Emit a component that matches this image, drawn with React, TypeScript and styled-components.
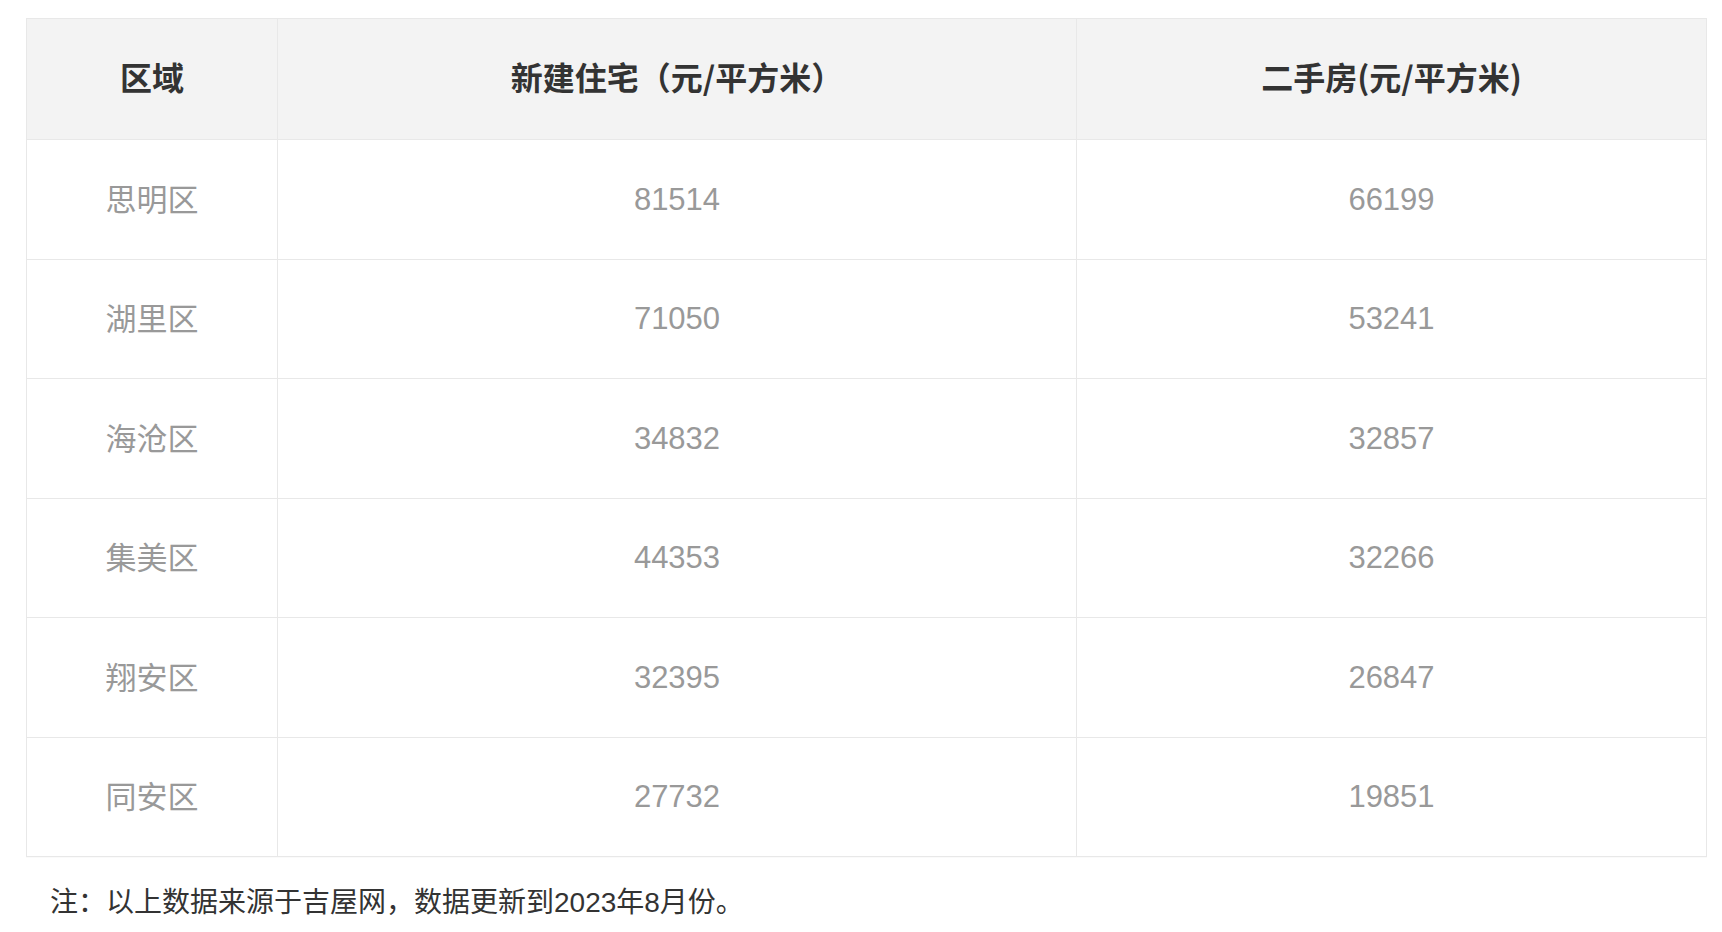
import styled, { createGlobalStyle } from "styled-components";

const rows = [
  { area: "思明区", fresh: 81514, used: 66199 },
  { area: "湖里区", fresh: 71050, used: 53241 },
  { area: "海沧区", fresh: 34832, used: 32857 },
  { area: "集美区", fresh: 44353, used: 32266 },
  { area: "翔安区", fresh: 32395, used: 26847 },
  { area: "同安区", fresh: 27732, used: 19851 },
];

const GlobalStyle = createGlobalStyle`
  html, body {
    margin: 0;
    padding: 0;
    background: #ffffff;
  }
  body {
    font-family: "Liberation Sans", "Noto Sans CJK SC", sans-serif;
  }
`;

const App = () => {
  return (
    <>
      <GlobalStyle />
      <Page>
        <PriceTable>
          <colgroup>
            <col style={{ width: 251 }} />
            <col style={{ width: 799 }} />
            <col style={{ width: 630 }} />
          </colgroup>
          <thead>
            <tr>
              <HeadCell>区域</HeadCell>
              <HeadCell>新建住宅（元/平方米）</HeadCell>
              <HeadCell>二手房(元/平方米)</HeadCell>
            </tr>
          </thead>
          <tbody>
            {rows.map((row) => (
              <BodyRow key={row.area}>
                <Cell $cjk>{row.area}</Cell>
                <Cell>{row.fresh}</Cell>
                <Cell>{row.used}</Cell>
              </BodyRow>
            ))}
          </tbody>
        </PriceTable>
        <Note>注：以上数据来源于吉屋网，数据更新到2023年8月份。</Note>
      </Page>
    </>
  );
};

const Page = styled.div`
  padding: 18px 0 0 26px;
`;

const PriceTable = styled.table`
  width: 1680px;
  table-layout: fixed;
  border-collapse: collapse;
  border: 1px solid #e8e8e8;
  box-shadow: 0 1px 1px rgba(0, 0, 0, 0.02);
`;

const HeadCell = styled.th`
  height: 114px;
  padding: 0 0 6px;
  background: #f3f3f3;
  border: 1px solid #e8e8e8;
  font-family: "Noto Sans CJK SC", "Liberation Sans", sans-serif;
  font-size: 32px;
  line-height: 1;
  font-weight: 700;
  color: #333333;
  text-align: center;
  vertical-align: middle;
`;

const BodyRow = styled.tr`
  height: 119.5px;
`;

const Cell = styled.td<{ $cjk?: boolean }>`
  padding: 0 0 ${(p) => (p.$cjk ? "4px" : "0")};
  border: 1px solid #e8e8e8;
  font-family: ${(p) =>
    p.$cjk
      ? `"Noto Sans CJK SC", "Liberation Sans", sans-serif`
      : `"Liberation Sans", "Noto Sans CJK SC", sans-serif`};
  font-size: 31px;
  line-height: 1;
  color: #999999;
  text-align: center;
  vertical-align: middle;
`;

const Note = styled.p`
  margin: 26px 0 0 24px;
  font-size: 28px;
  line-height: 40px;
  color: #333333;
`;

export default App;
